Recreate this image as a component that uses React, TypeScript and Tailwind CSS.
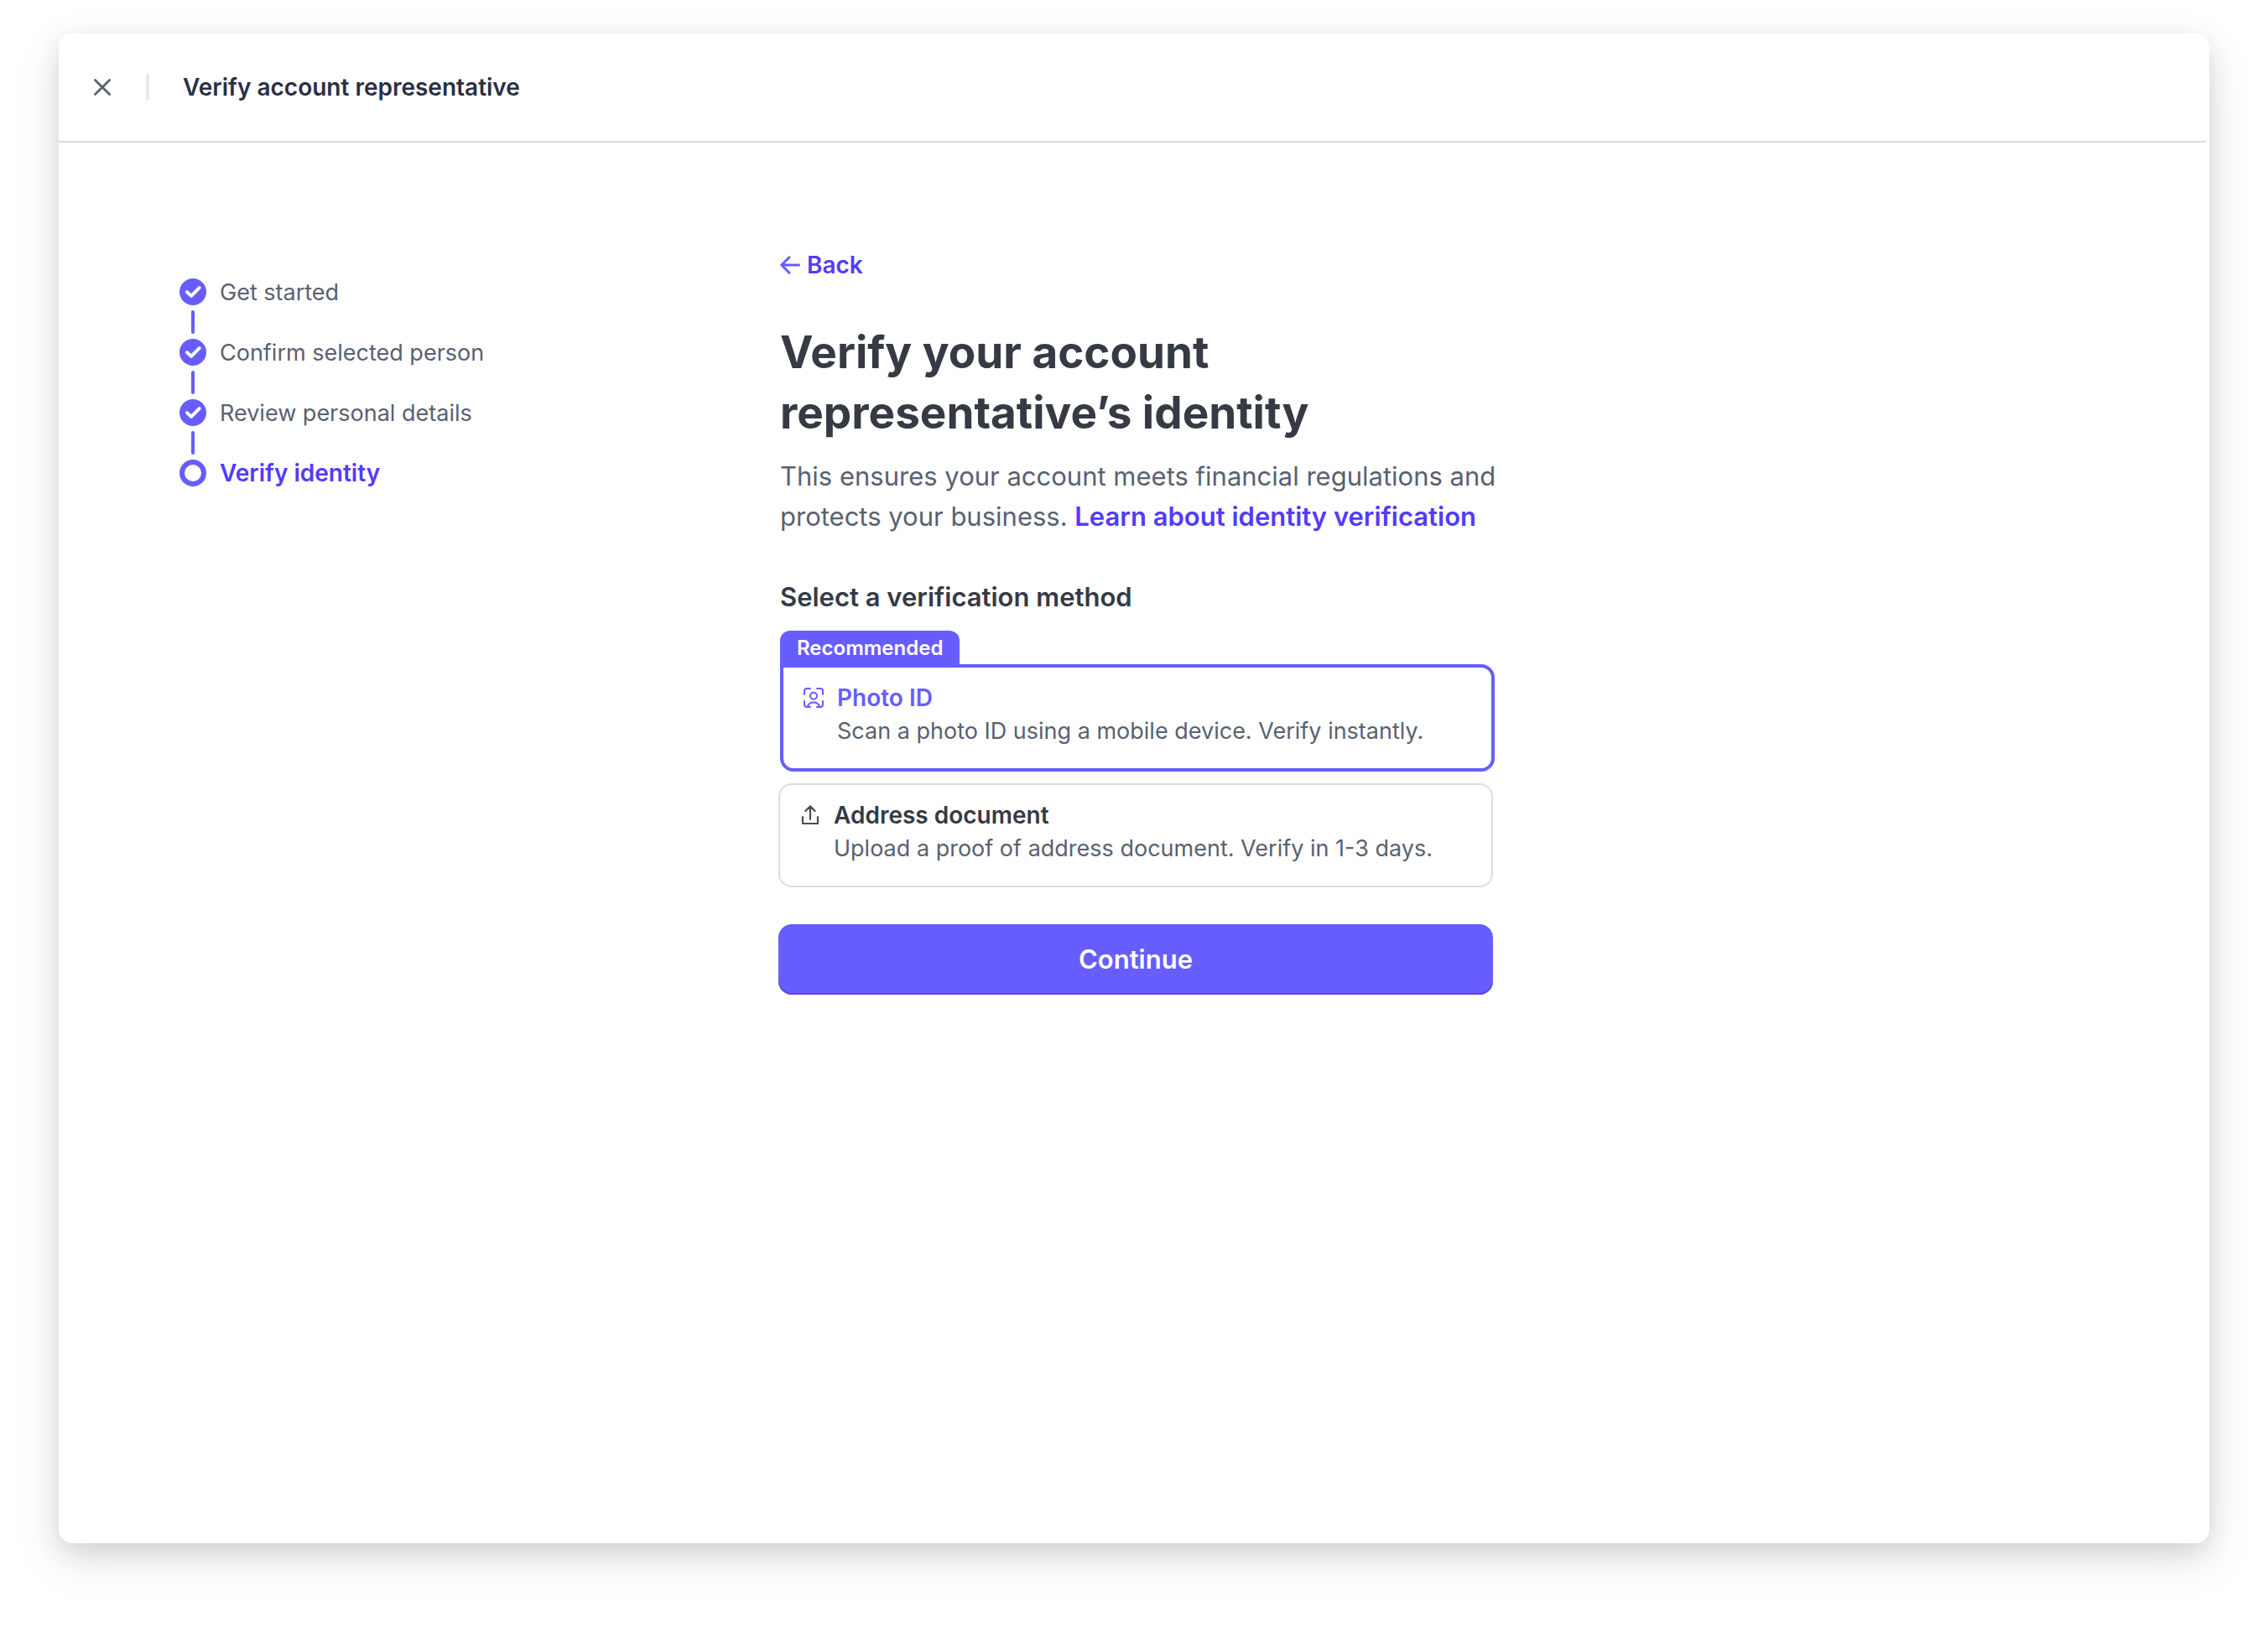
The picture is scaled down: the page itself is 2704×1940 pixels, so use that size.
import React, { useState } from "react";

const doneSteps = ["Get started", "Confirm selected person", "Review personal details"];

function CloseIcon() {
  return (
    <svg className="h-6 w-6" viewBox="0 0 24 24" fill="none" stroke="#596171" strokeWidth="2.8" strokeLinecap="round" aria-hidden="true">
      <path d="M3.4 3.4 20.600 20.600M20.600 3.4 3.4 20.600" />
    </svg>
  );
}

function StepDone() {
  return (
    <svg className="h-8 w-8 shrink-0" viewBox="0 0 32 32" fill="none" aria-hidden="true">
      <circle cx="16" cy="16" r="16" fill="#675dff" />
      <path d="M9 16.2 14 20.8 23.7 11.2" stroke="#fff" strokeWidth="4" strokeLinecap="round" strokeLinejoin="round" />
    </svg>
  );
}

function StepCurrent() {
  return (
    <svg className="h-8 w-8 shrink-0" viewBox="0 0 32 32" fill="none" aria-hidden="true">
      <circle cx="16" cy="16" r="13" stroke="#675dff" strokeWidth="6" />
    </svg>
  );
}

function ArrowLeft() {
  return (
    <svg className="h-6 w-6" viewBox="0 0 24 24" fill="none" stroke="#675dff" strokeWidth="3" strokeLinecap="round" strokeLinejoin="round" aria-hidden="true">
      <path d="M22.500 12H2M11 2.8 1.8 12 11 21.2" />
    </svg>
  );
}

function FaceScanIcon() {
  return (
    <svg className="h-6 w-6" viewBox="0 0 24 24" fill="none" stroke="#675dff" strokeWidth="2" strokeLinecap="round" aria-hidden="true">
      <path d="M1 8V4a3 3 0 0 1 3-3h4M16 1h4a3 3 0 0 1 3 3v4M1 16v4a3 3 0 0 0 3 3h4M23 16v4a3 3 0 0 1-3 3h-4" />
      <circle cx="12" cy="9.7" r="4" />
      <path d="M5 22.600C5.800 19.400 8.200 17.400 12 17.400s6.200 2 7 5.200" />
    </svg>
  );
}

function UploadIcon() {
  return (
    <svg className="h-6 w-6" viewBox="0 0 24 24" fill="none" stroke="#474e5a" strokeWidth="2.2" strokeLinecap="round" strokeLinejoin="round" aria-hidden="true">
      <path d="M12 17V1.500M6.400 7 12 1.400 17.600 7M3 14v8h18v-8" />
    </svg>
  );
}

export default function App() {
  const [method, setMethod] = useState("photo");

  return (
    <div className="flex min-h-screen flex-col bg-white px-[70px] pt-10 pb-[100px] font-['Inter','Liberation_Sans',sans-serif] text-[28px] leading-10 text-[#596171]">
      <div className="flex flex-1 flex-col rounded-2xl bg-white shadow-[0_10px_30px_rgba(0,0,0,0.11),0_20px_60px_rgba(0,0,0,0.1)]">
        <header className="mr-1 flex h-[130px] items-center border-b-2 border-[#d8dee4] pl-10">
          <button type="button" aria-label="Close" className="flex">
            <CloseIcon />
          </button>
          <span className="ml-10 h-8 w-1 rounded-full bg-[#e6e9f0]" />
          <h1 className="ml-10 font-semibold text-[#2a2f45]">Verify account representative</h1>
        </header>

        <div className="grid grid-cols-[1fr_854px_1fr] pr-[138px] pl-[144px]">
          <nav aria-label="Progress" className="pt-[162px]">
            <ol>
              {doneSteps.map((step) => (
                <li key={step} className="flex h-[72px] gap-4">
                  <div className="flex flex-col items-center gap-1.5">
                    <StepDone />
                    <span className="h-7 w-1 rounded-sm bg-[#675dff]" />
                  </div>
                  <span className="text-[27px] leading-[34px]">{step}</span>
                </li>
              ))}
              <li aria-current="step" className="flex gap-4">
                <StepCurrent />
                <span className="leading-8 font-semibold text-[#533afd]">Verify identity</span>
              </li>
            </ol>
          </nav>

          <main className="pt-[126px]">
            <a href="#back" className="ml-0.5 inline-flex items-center gap-2 align-top font-semibold text-[#533afd]">
              <ArrowLeft />
              Back
            </a>
            <h2 className="mt-12 ml-0.5 text-[53px] leading-[72px] font-bold text-[#353a44]">
              Verify your account
              <br />
              representative’s identity
            </h2>
            <p className="mt-4 ml-0.5 text-[31px] leading-[48px] whitespace-nowrap">
              This ensures your account meets financial regulations and
              <br />
              protects your business.{" "}
              <a href="#learn" className="font-semibold text-[#533afd]">
                Learn about identity verification
              </a>
            </p>

            <form className="mt-[52px]" onSubmit={(e) => e.preventDefault()}>
              <fieldset>
                <legend className="ml-0.5 text-[31px] leading-10 font-semibold text-[#353a44]">
                  Select a verification method
                </legend>
                <div className="mt-5 ml-0.5 flex">
                  <span className="h-10 rounded-t-xl bg-[#675dff] px-5 text-[24px] leading-[42px] font-semibold text-white">
                    Recommended
                  </span>
                </div>
                <label className="ml-0.5 flex cursor-pointer gap-4 rounded-2xl rounded-tl-none border-4 border-[#675dff] px-6 pt-4 pb-6">
                  <input type="radio" name="method" className="sr-only" checked={method === "photo"} onChange={() => setMethod("photo")} />
                  <span className="flex h-10 items-center">
                    <FaceScanIcon />
                  </span>
                  <span className="flex flex-col">
                    <span className="font-semibold text-[#675dff]">Photo ID</span>
                    <span className="text-[27px]">Scan a photo ID using a mobile device. Verify instantly.</span>
                  </span>
                </label>
                <label className="mt-3.5 mr-0.5 flex cursor-pointer gap-4 rounded-2xl border-2 border-[#d8dee4] px-6 pt-4 pb-6">
                  <input type="radio" name="method" className="sr-only" checked={method === "address"} onChange={() => setMethod("address")} />
                  <span className="flex h-10 items-center">
                    <UploadIcon />
                  </span>
                  <span className="flex flex-col">
                    <span className="font-semibold text-[#353a44]">Address document</span>
                    <span className="text-[27px]">Upload a proof of address document. Verify in 1-3 days.</span>
                  </span>
                </label>
              </fieldset>
              <div className="mt-11 mr-0.5">
                <button type="submit" className="h-[84px] w-full rounded-2xl bg-[#675dff] text-[31px] font-semibold text-white shadow-[inset_0_-2px_0_#5848d8]">
                  Continue
                </button>
              </div>
            </form>
          </main>
        </div>
      </div>
    </div>
  );
}
